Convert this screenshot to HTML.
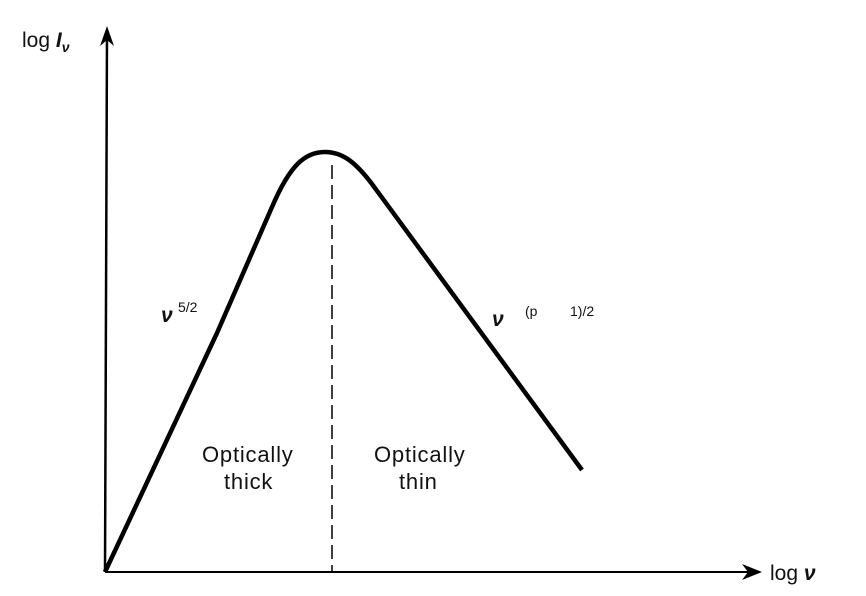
<!DOCTYPE html>
<html><head><meta charset="utf-8"><style>
html,body{margin:0;padding:0;background:#fff;}
svg{display:block;}
text{font-family:"Liberation Sans",sans-serif;fill:#111;}
</style></head><body>
<svg width="866" height="596" viewBox="0 0 866 596">
<g stroke="#000" fill="none">
<line x1="107" y1="32" x2="105" y2="572" stroke-width="2.5"/>
<line x1="105" y1="572" x2="755" y2="572" stroke-width="2"/>
<path d="M105 572 L217 333 L272 207 C290 165 305 152 325 152 C343 152 356 163 372 184 L582 470" stroke-width="4.5" stroke-linejoin="round"/>
<line x1="332" y1="165" x2="332" y2="572" stroke-width="1.5" stroke-dasharray="14,6"/>
</g>
<path d="M107 26 L100 46 L107 40 L114 46 Z" fill="#000"/>
<path d="M762 572 L742 564 L748 572 L742 580 Z" fill="#000"/>
<text x="22" y="47" font-size="21">log <tspan font-weight="bold" font-style="italic">I</tspan><tspan font-size="14" font-weight="bold" font-style="italic" dy="5">ν</tspan></text>
<text x="770" y="580" font-size="21">log <tspan font-weight="bold" font-style="italic">ν</tspan></text>
<text x="161" y="322" font-size="21" font-weight="bold" font-style="italic">ν</text>
<text x="178" y="312" font-size="14">5/2</text>
<text x="492" y="326" font-size="21" font-weight="bold" font-style="italic">ν</text>
<text x="525" y="316" font-size="14">(p</text>
<text x="570" y="316" font-size="14">1)/2</text>
<g font-size="22" letter-spacing="0.8">
<text x="202" y="462">Optically</text>
<text x="224" y="489">thick</text>
<text x="374" y="462">Optically</text>
<text x="399" y="489">thin</text>
</g>
</svg>
</body></html>
